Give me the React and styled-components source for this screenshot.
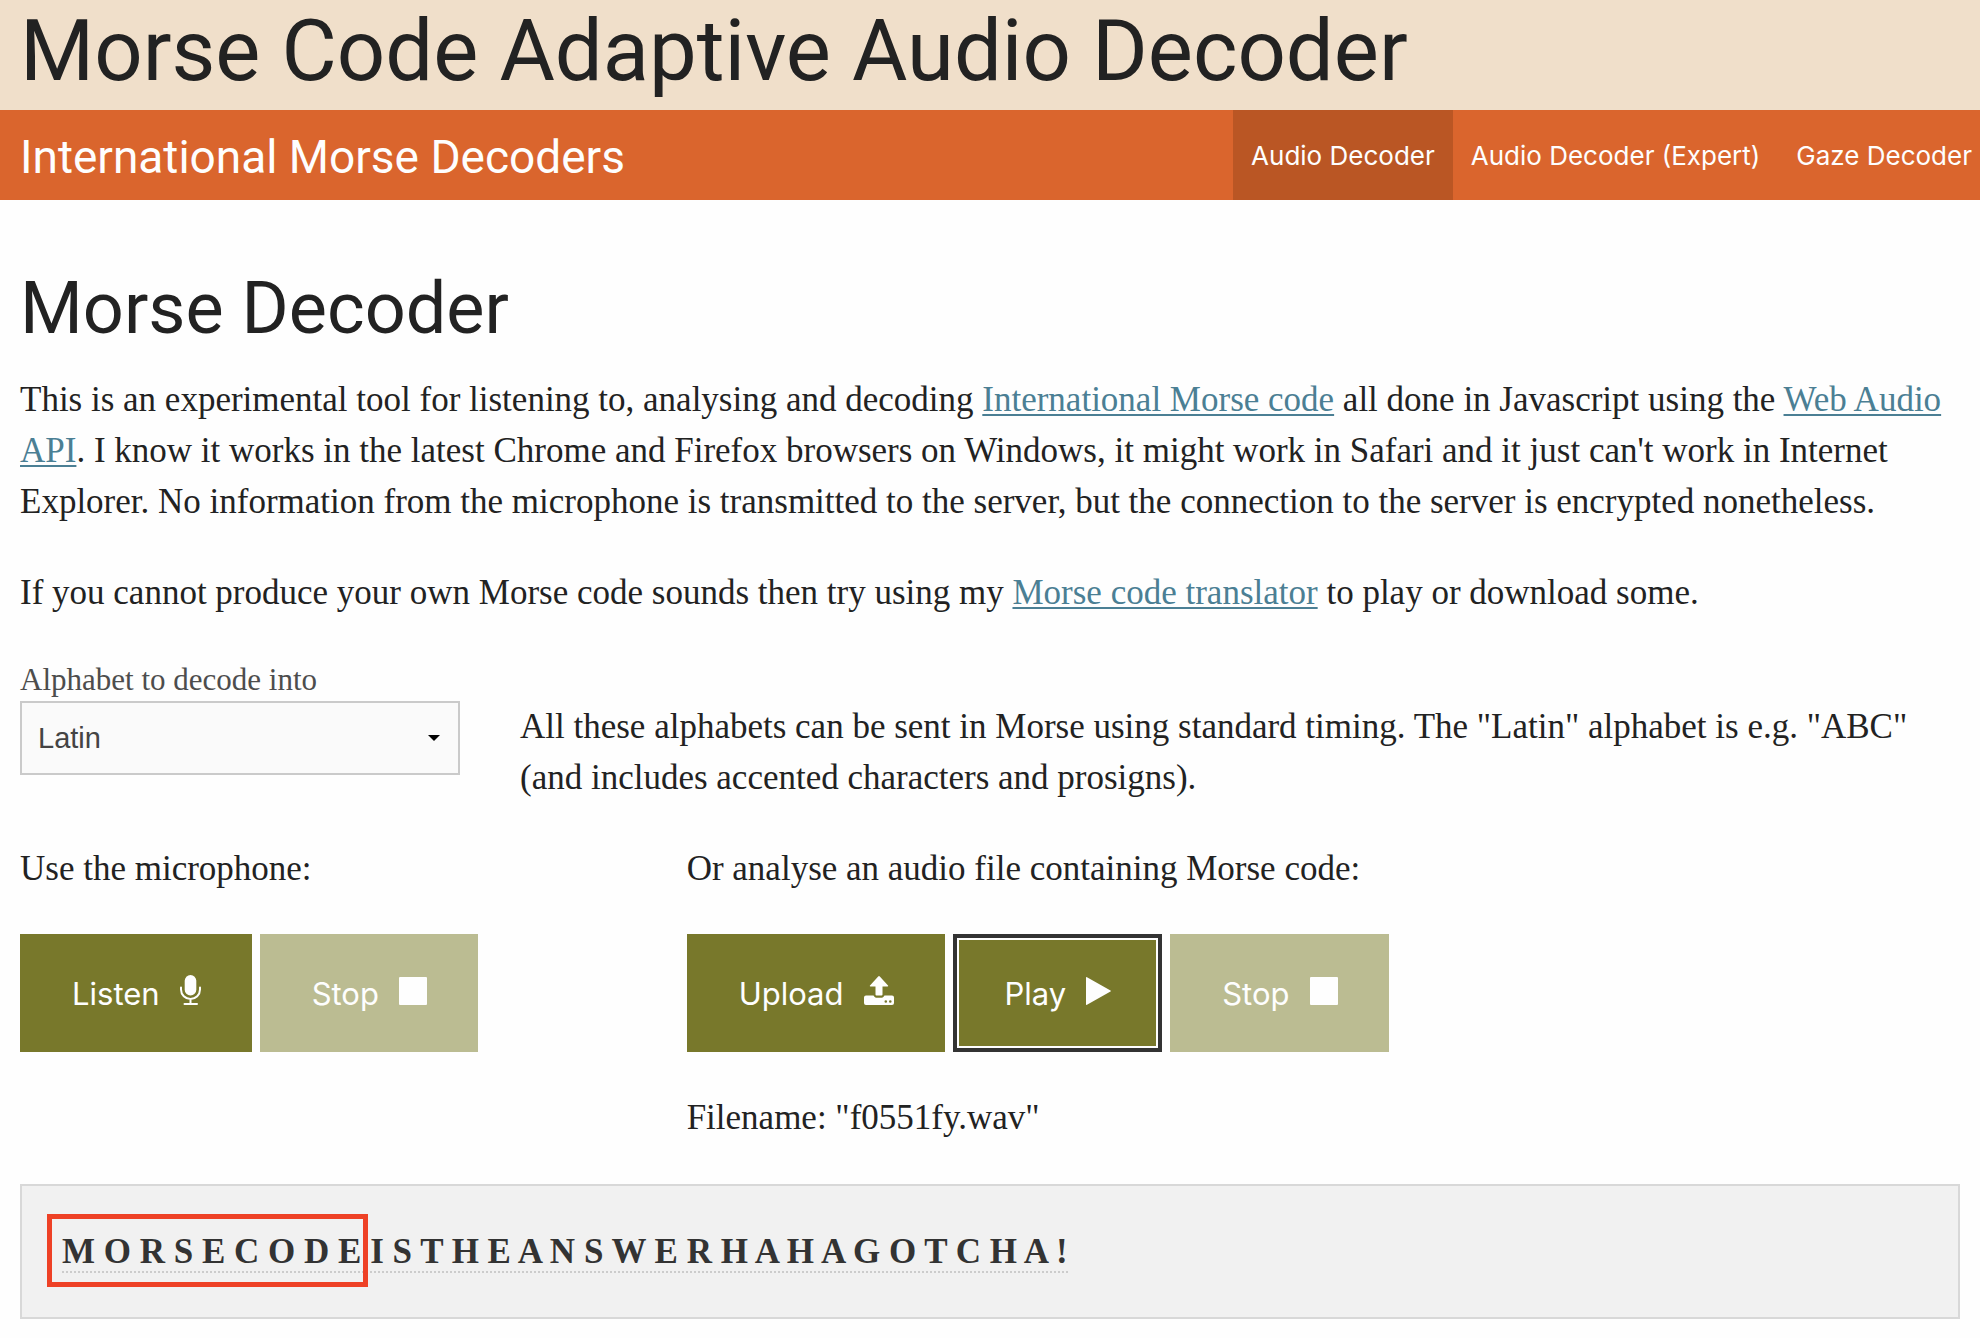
import React from 'react';
import styled, { createGlobalStyle } from 'styled-components';

const sans = '"Inter", "Helvetica Neue", sans-serif';
const display = '"Roboto", "Helvetica Neue", sans-serif';
const serif = '"Liberation Serif", Georgia, serif';

const GlobalStyle = createGlobalStyle`
  *, *::before, *::after { box-sizing: border-box; }
  body {
    margin: 0;
    background: #fefefe;
    color: #222;
    font: 35px/51px ${serif};
  }
`;

const Banner = styled.header`
  padding: 0 20px 8px;
  background: #f0dfca;
`;

const SiteTitle = styled.h1`
  margin: 0;
  font: 400 85px/102px ${display};
`;

const TopBar = styled.nav`
  display: flex;
  justify-content: space-between;
  align-items: stretch;
  min-height: 90px;
  padding-left: 20px;
  background: #da652d;
  color: #fefefe;
`;

const Brand = styled.span`
  align-self: center;
  padding-top: 4px;
  font: 400 46px/56px ${display};
`;

const Menu = styled.ul`
  display: flex;
  margin: 0 -10px 0 0;
  padding: 0;
  list-style: none;
`;

const MenuItem = styled.li`
  display: flex;
`;

const MenuLink = styled.a`
  display: flex;
  align-items: center;
  padding: 2px 18px 0;
  background: ${(p) => (p.$active ? '#ba5624' : 'transparent')};
  color: inherit;
  font: 26px/32px ${sans};
  text-decoration: none;
  white-space: nowrap;
`;

const Page = styled.main`
  padding: 59px 20px 20px;
`;

const Heading = styled.h2`
  margin: 0 0 15px;
  font: 400 72px/100px ${display};
`;

const Text = styled.p`
  margin: 0 0 40px;
`;

const Link = styled.a`
  color: #4b7f94;
  text-decoration: underline;
  text-decoration-thickness: 2px;
  text-underline-offset: 3px;
`;

const Row = styled.div`
  display: grid;
  grid-template-columns: repeat(12, minmax(0, 1fr));
  column-gap: 60px;
`;

const Cell = styled.div`
  grid-column: span ${(p) => p.$span};
`;

const FieldLabel = styled.label`
  display: block;
  color: #4d4d4d;
  font-size: 31px;
  line-height: 43px;
`;

const SelectWrap = styled.div`
  position: relative;
`;

const Select = styled.select`
  display: block;
  width: 100%;
  height: 74px;
  padding: 0 40px 0 16px;
  appearance: none;
  border: 2px solid #cacaca;
  border-radius: 0;
  background: #fafafa;
  color: #444;
  font: 29px/40px "Liberation Sans", Arial, sans-serif;
`;

const Caret = styled.svg`
  position: absolute;
  top: 34px;
  right: 20px;
  pointer-events: none;
`;

const SelectRow = styled(Row)`
  margin-bottom: 40px;
`;

const Hint = styled.p`
  margin: 43px 0 0;
`;

const Buttons = styled.div`
  display: flex;
  flex-wrap: wrap;
  gap: 8px;
  margin-bottom: 40px;
`;

const Button = styled.button`
  display: inline-flex;
  align-items: baseline;
  gap: 20px;
  padding: 40px 51px 38px 52px;
  border: 0;
  background: #78782b;
  color: #fefefe;
  font: 31px/40px ${sans};
  box-shadow: ${(p) => (p.$focused ? 'inset 0 0 0 4px #333, inset 0 0 0 6px #fefefe' : 'none')};

  &:disabled {
    background: #bbbc92;
  }
`;

const FileName = styled.p`
  margin: 0 0 41px;
`;

const Output = styled.div`
  padding: 40px;
  border: 2px solid #d8d8d8;
  background: #f1f1f1;
  color: #333;
  font-weight: 700;
`;

const Decoded = styled.span`
  border-bottom: 2px dotted #ccc;
`;

const Highlight = styled.span`
  position: relative;

  &::after {
    content: '';
    position: absolute;
    inset: -18px -7px -16px -15px;
    border: 5px solid #ee4126;
  }
`;

const MicIcon = () => (
  <svg width="21" height="30" viewBox="0 0 21 30" aria-hidden="true">
    <rect x="4.7" y="0" width="11.6" height="20.5" rx="5.8" fill="currentColor" />
    <path d="M1 12.5v2a9.5 9.5 0 0 0 19 0v-2M10.5 24v5M4.5 29h12.500" fill="none" stroke="currentColor" strokeWidth="2" strokeLinecap="round" />
  </svg>
);

const StopIcon = () => (
  <svg width="28" height="28" viewBox="0 0 28 28" aria-hidden="true">
    <rect width="28" height="28" rx="1" fill="currentColor" />
  </svg>
);

const PlayIcon = () => (
  <svg width="25" height="28" viewBox="0 0 25 28" aria-hidden="true">
    <path d="M0 .7Q0-.3 1 .3L24.500 13.500Q25.300 14 24.500 14.500L1 27.700Q0 28.300 0 27.300Z" fill="currentColor" />
  </svg>
);

const UploadIcon = () => (
  <svg width="30" height="29" viewBox="0 0 30 29" aria-hidden="true">
    <path d="M14.200.5q.8-.8 1.600 0l8.200 9q.6 1-.5 1H18.500v8q0 1-1 1h-5q-1 0-1-1v-8H6.500q-1.100 0-.5-1z" fill="currentColor" />
    <path fillRule="evenodd" d="M2 19.500h7.500l1.200 1.500q.6.700 1.500.7h5.600q.9 0 1.500-.7l1.200-1.500H28a2 2 0 0 1 2 2V27a2 2 0 0 1-2 2H2a2 2 0 0 1-2-2v-5.500a2 2 0 0 1 2-2zM21.800 24.200a1.300 1.300 0 1 0 0 2.600 1.300 1.300 0 0 0 0-2.600zM26.300 24.200a1.300 1.300 0 1 0 0 2.600 1.300 1.300 0 0 0 0-2.600z" fill="currentColor" />
  </svg>
);

const menu = ['Audio Decoder', 'Audio Decoder (Expert)', 'Gaze Decoder'];

export default function App() {
  return (
    <>
      <GlobalStyle />
      <Banner>
        <SiteTitle>Morse Code Adaptive Audio Decoder</SiteTitle>
      </Banner>
      <TopBar>
        <Brand>International Morse Decoders</Brand>
        <Menu>
          {menu.map((name, i) => (
            <MenuItem key={name}>
              <MenuLink href="#" $active={i === 0}>{name}</MenuLink>
            </MenuItem>
          ))}
        </Menu>
      </TopBar>
      <Page>
        <Heading>Morse Decoder</Heading>
        <Text>
          This is an experimental tool for listening to, analysing and decoding{' '}
          <Link href="#">International Morse code</Link> all done in Javascript using the{' '}
          <Link href="#">Web Audio API</Link>. I know it works in the latest Chrome and Firefox
          browsers on Windows, it might work in Safari and it just can't work in Internet Explorer.
          No information from the microphone is transmitted to the server, but the connection to the
          server is encrypted nonetheless.
        </Text>
        <Text>
          If you cannot produce your own Morse code sounds then try using my{' '}
          <Link href="#">Morse code translator</Link> to play or download some.
        </Text>
        <SelectRow>
          <Cell $span={3}>
            <FieldLabel htmlFor="alphabet">Alphabet to decode into</FieldLabel>
            <SelectWrap>
              <Select id="alphabet" defaultValue="Latin">
                <option>Latin</option>
              </Select>
              <Caret width="12" height="6" viewBox="0 0 12 6" aria-hidden="true">
                <path d="M0 0h12L6 6z" fill="#000" />
              </Caret>
            </SelectWrap>
          </Cell>
          <Cell $span={9}>
            <Hint>
              All these alphabets can be sent in Morse using standard timing. The "Latin" alphabet is
              e.g. "ABC" (and includes accented characters and prosigns).
            </Hint>
          </Cell>
        </SelectRow>
        <Row>
          <Cell $span={4}>
            <Text>Use the microphone:</Text>
            <Buttons>
              <Button type="button">Listen <MicIcon /></Button>
              <Button type="button" disabled>Stop <StopIcon /></Button>
            </Buttons>
          </Cell>
          <Cell $span={8}>
            <Text>Or analyse an audio file containing Morse code:</Text>
            <Buttons>
              <Button type="button">Upload <UploadIcon /></Button>
              <Button type="button" $focused>Play <PlayIcon /></Button>
              <Button type="button" disabled>Stop <StopIcon /></Button>
            </Buttons>
            <FileName>Filename: "f0551fy.wav"</FileName>
          </Cell>
        </Row>
        <Output>
          <Decoded>
            <Highlight>M O R S E C O D E</Highlight> I S T H E A N S W E R H A H A G O T C H A !
          </Decoded>
        </Output>
      </Page>
    </>
  );
}
